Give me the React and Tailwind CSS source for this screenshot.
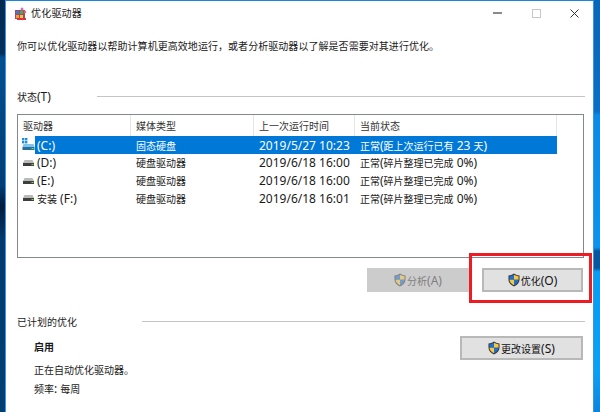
const FONT = 'font-["Noto_Sans","Noto_Sans_CJK_SC",sans-serif]';

// the dialog's Chinese glyphs are smaller than its Latin ones
const T = ({ children }) =>
  children.split(/([\u3000-\u9fff\uff00-\uffef]+)/).filter(Boolean).map((part, i) =>
    /[\u3000-\u9fff\uff00-\uffef]/.test(part) ? (
      <span key={i} className="text-[10px]">{part}</span>
    ) : (
      <span key={i} className="text-[12px] whitespace-pre">{part}</span>
    )
  );

const Shield = ({ faded }) => (
  <svg width="12" height="14" viewBox="0 0 13 15" className={`shrink-0 ${faded ? 'opacity-50' : ''}`}>
    <path d="M6.5 0.5 C8.5 2 10.5 2.5 12.5 2.5 L12.5 7 C12.5 10.5 10 13 6.5 14.5 C3 13 0.5 10.5 0.5 7 L0.5 2.5 C2.5 2.5 4.5 2 6.5 0.5Z" fill="#3a3a3a" />
    <path d="M6.5 1.8 L6.5 7.2 L1.6 7.2 L1.6 3.4 C3.2 3.3 5 2.8 6.5 1.8Z" fill="#1e6fd0" />
    <path d="M6.5 1.8 C8 2.8 9.8 3.3 11.4 3.4 L11.4 7.2 L6.5 7.2Z" fill="#f5c842" />
    <path d="M1.6 7.2 L6.5 7.2 L6.5 13.2 C3.8 12 1.8 10 1.6 7.2Z" fill="#f5c842" />
    <path d="M6.5 7.2 L11.4 7.2 C11.2 10 9.2 12 6.5 13.2Z" fill="#1e6fd0" />
  </svg>
);

const DriveIcon = ({ system }) => (
  <svg width="13" height="13" viewBox="0 0 13 13" className="shrink-0">
    {system && (
      <g fill="#1f8fdc">
        <rect x="0" y="0" width="2.4" height="2.4" />
        <rect x="3" y="0" width="2.4" height="2.4" />
        <rect x="0" y="3" width="2.4" height="2.4" />
        <rect x="3" y="3" width="2.4" height="2.4" />
      </g>
    )}
    <path d={system ? 'M1.5 6 L11.5 6 L12.5 9 L0.5 9Z' : 'M2.5 4 L10.5 4 L12 7 L1 7Z'} fill={system ? '#7fc4ea' : '#b9b9b9'} />
    <rect x={system ? 0.5 : 1} y={system ? 9 : 7} width={system ? 12 : 11} height="3" fill={system ? '#2a6f9c' : '#3e3e3e'} />
    <rect x="9.5" y={system ? 10 : 8} width="2" height="1" fill="#6fe04a" />
  </svg>
);

const AppIcon = () => (
  <svg width="13" height="13" viewBox="0 0 13 13" className="shrink-0">
    <rect x="1" y="3" width="10" height="9" fill="#a8485e" />
    <rect x="2" y="4" width="3" height="3" fill="#3a7bd5" />
    <rect x="6" y="4" width="3" height="3" fill="#42b04a" />
    <rect x="2" y="8" width="3" height="3" fill="#f0a030" />
    <rect x="6" y="8" width="3" height="3" fill="#d8d040" />
    <circle cx="8" cy="2" r="1.5" fill="#d070c0" />
    <circle cx="11" cy="5" r="1.3" fill="#e06090" />
    <rect x="3" y="11" width="9" height="2" fill="#e03040" />
  </svg>
);

const WinButton = ({ w, disabled, children }) => (
  <button
    className={`h-[24px] ${w} flex items-center justify-center gap-px border-2 leading-[14px] ${
      disabled
        ? 'bg-[#cccccc] border-[#cccccc] text-[#808080]'
        : 'bg-[#e1e1e1] border-[#b8b8b8] text-[#111111]'
    }`}
  >
    <Shield faded={disabled} />
    <span><T>{children}</T></span>
  </button>
);

const SectionTitle = ({ label, lineWidth }) => (
  <div className="h-[14px] flex items-center justify-between leading-[14px] text-[#1a1a1a]">
    <span><T>{label}</T></span>
    <div className={`h-px bg-[#c4c4c4] ${lineWidth}`}></div>
  </div>
);

const rows = [
  { name: '(C:)', media: '固态硬盘', time: '2019/5/27 10:23', status: '正常(距上次运行已有 23 天)', system: true },
  { name: '(D:)', media: '硬盘驱动器', time: '2019/6/18 16:00', status: '正常(碎片整理已完成 0%)' },
  { name: '(E:)', media: '硬盘驱动器', time: '2019/6/18 16:00', status: '正常(碎片整理已完成 0%)' },
  { name: '安装 (F:)', media: '硬盘驱动器', time: '2019/6/18 16:01', status: '正常(碎片整理已完成 0%)' },
];

export default function App() {
  return (
    <div className={`relative w-[600px] h-[412px] flex overflow-hidden ${FONT}`}>
      {/* desktop behind the window */}
      <div className="w-[5px] shrink-0 bg-[linear-gradient(180deg,#03294f_0%,#04305c_13%,#02508f_14%,#033e75_45%,#021c3c_50%,#033a6d_58%,#03406f_100%)]"></div>

      <div className="w-[589px] shrink-0 h-full border-x border-t border-x-[#3b94e6] border-t-[#1a86dc] bg-white pl-[11px] pr-[8px] flex flex-col text-[#1a1a1a]">
        {/* title bar */}
        <div className="h-[24px] flex items-center -ml-[3px] mr-[6px]">
          <AppIcon />
          <span className="ml-[4px] text-[10px] leading-none tracking-[0.2px]">优化驱动器</span>
          <div className="ml-auto flex items-center">
            <div className="w-[9px] h-[2px] bg-[#8a8a8a]"></div>
            <div className="ml-[30px] w-[9px] h-[9px] border border-[#c8c8c8]"></div>
            <svg width="9" height="9" viewBox="0 0 9 9" className="ml-[29px]">
              <path d="M0.5 0.5 L8.5 8.5 M8.5 0.5 L0.5 8.5" stroke="#333333" strokeWidth="1" />
            </svg>
          </div>
        </div>

        <p className="mt-[15px] text-[10px] leading-[12px] tracking-[0.05px]">你可以优化驱动器以帮助计算机更高效地运行，或者分析驱动器以了解是否需要对其进行优化。</p>

        <div className="mt-[37px]">
          <SectionTitle label="状态(T)" lineWidth="w-[488px]" />
        </div>

        <div className="mt-[11px] w-[567px] h-[144px] border border-[#828790] leading-[14px] shrink-0">
          <div className="h-[21px] flex w-[539px] text-[#333333]">
            <div className="w-[113px] pl-[5px] flex items-center border-r border-[#e5e5e5]"><T>驱动器</T></div>
            <div className="w-[123px] pl-[5px] flex items-center border-r border-[#e5e5e5]"><T>媒体类型</T></div>
            <div className="w-[101px] pl-[5px] flex items-center border-r border-[#e5e5e5]"><T>上一次运行时间</T></div>
            <div className="w-[202px] pl-[5px] flex items-center border-r border-[#e5e5e5]"><T>当前状态</T></div>
          </div>
          {rows.map((r) => (
            <div key={r.name} className="h-[17.67px] flex items-center">
              <div className="w-[17px] pl-[4px] shrink-0">
                <DriveIcon system={r.system} />
              </div>
              <div className={`w-[522px] h-full flex items-center ${r.system ? 'bg-[#0078d7] text-white' : 'text-[#1a1a1a]'}`}>
                <div className="w-[96px] pl-[2px]"><T>{r.name}</T></div>
                <div className="w-[123px] pl-[5px]"><T>{r.media}</T></div>
                <div className="w-[101px] pl-[5px]"><T>{r.time}</T></div>
                <div className="pl-[5px]"><T>{r.status}</T></div>
              </div>
            </div>
          ))}
        </div>

        <div className="mt-[10px] flex justify-end gap-[13px] w-[566px]">
          <WinButton w="w-[102px]" disabled>分析(A)</WinButton>
          <WinButton w="w-[101px]">优化(O)</WinButton>
        </div>

        <div className="mt-[22px]">
          <SectionTitle label="已计划的优化" lineWidth="w-[443px]" />
        </div>

        <div className="mt-[8px] flex justify-between w-[566px]">
          <div className="pl-[17px] pt-[2px] leading-[14px]">
            <div className="font-bold"><T>启用</T></div>
            <div className="mt-[7px]"><T>正在自动优化驱动器。</T></div>
            <div className="mt-[3px]"><T>频率: 每周</T></div>
          </div>
          <WinButton w="w-[123px]">更改设置(S)</WinButton>
        </div>
      </div>

      <div className="w-[6px] shrink-0 bg-[linear-gradient(180deg,#0a66b8_0%,#0b6ec4_27%,#0a8ae6_28%,#0a93ee_60%,#07569f_61%,#07569f_65%,#089cf4_66%,#0aa0f6_90%,#0c84dc_100%)]"></div>

      {/* red highlight drawn over the screenshot */}
      <div className="absolute left-[469px] top-[253px] w-[123px] h-[50px] border-[3px] border-[#ed1c24]"></div>
    </div>
  );
}
